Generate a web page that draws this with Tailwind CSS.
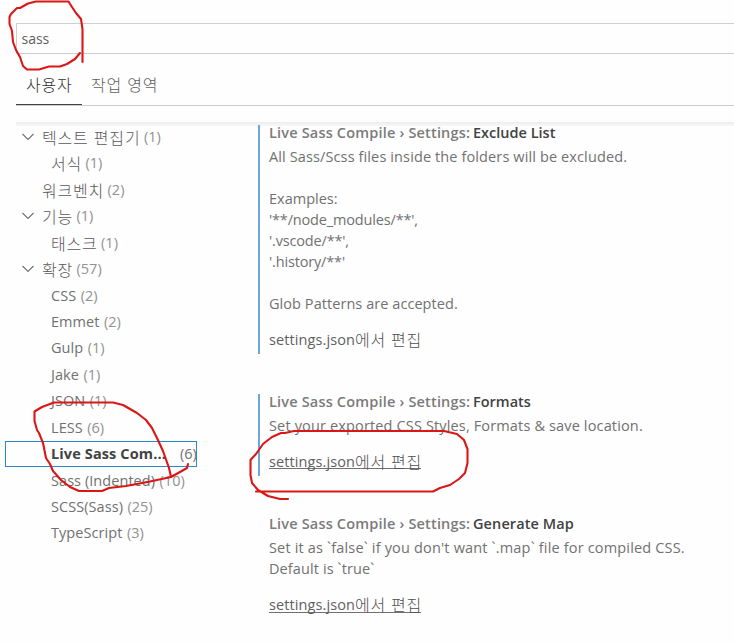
<!DOCTYPE html>
<html lang="ko">
<head>
<meta charset="utf-8">
<title>Settings</title>
<script src="https://cdn.jsdelivr.net/npm/@tailwindcss/browser@4"></script>
</head>
<body class="relative h-[643px] w-[734px] overflow-hidden bg-[#fefefe] font-['Open_Sans','Noto_Sans_CJK_KR',sans-serif] text-[14.5px] text-[#717171]">
<header class="pt-[23px] pl-4">
  <div class="flex h-[31px] items-center border border-r-0 border-[#cecece] pl-[4.5px] text-sm text-[#616161]">sass</div>
  <nav class="flex h-[52px] border-b border-[#cccccc] font-['Noto_Sans_CJK_KR',sans-serif] text-[16px] leading-[24px] font-light tracking-[0.8px] whitespace-nowrap">
    <div class="h-[51px] w-[66px] border-b border-[#424242] pt-[18px] pl-[10px] text-[#303030]">사용자</div>
    <div class="pt-[18px] pl-[9px] text-[#606060]">작업 영역</div>
  </nav>
  <div class="mt-4 h-1 bg-gradient-to-b from-[#ececec] to-[#f8f8f8]"></div>
</header>

<main class="-mt-[3px] flex">
  <aside class="w-[258px] pt-[0.7px] pl-[5px]">
    <ul id="tree" class="w-[192px] whitespace-nowrap"></ul>
  </aside>

  <section class="flex-1 whitespace-nowrap leading-[21px]">
    <article class="mt-[2px] h-[229px] border-l-2 border-[#6ba8d8] pl-[9px]">
      <h2 class="flex h-[15px] items-center gap-[3px] font-semibold text-[#7b7b7b]"><span class="w-[201px] tracking-[0.18px]">Live Sass Compile › Settings:</span><span class="text-[#424242]">Exclude List</span></h2>
      <div class="mt-[6px]">
        <p class="tracking-[0.12px]">All Sass/Scss files inside the folders will be excluded.</p>
        <p class="mt-[21px]">Examples:</p>
        <p class="tracking-[-0.16px]">'**/node_modules/**',</p>
        <p class="tracking-[-0.16px]">'.vscode/**',</p>
        <p class="tracking-[-0.16px]">'.history/**'</p>
        <p class="mt-[21px] tracking-[0.06px]">Glob Patterns are accepted.</p>
      </div>
      <a class="mt-[15px] flex h-[21px] items-center text-[#616161]"><span class="tracking-[0.1px]">settings.json</span><span class="font-['Noto_Sans_CJK_KR',sans-serif] text-[16px] font-light text-[#505050] tracking-[0.7px]">에서 편집</span></a>
    </article>

    <article class="mt-10 h-[82px] border-l-2 border-[#6ba8d8] pl-[9px]">
      <h2 class="flex h-[15px] items-center gap-[3px] font-semibold text-[#7b7b7b]"><span class="w-[201px] tracking-[0.18px]">Live Sass Compile › Settings:</span><span class="text-[#424242]">Formats</span></h2>
      <p class="mt-[6px] tracking-[0.15px]">Set your exported CSS Styles, Formats &amp; save location.</p>
      <a class="mt-[15px] flex h-[21px] w-[152px] items-center bg-[linear-gradient(#717171,#717171)] bg-[length:100%_1px] bg-[position:0_17px] bg-no-repeat text-[#616161]"><span class="tracking-[0.1px]">settings.json</span><span class="font-['Noto_Sans_CJK_KR',sans-serif] text-[16px] font-light text-[#505050] tracking-[0.7px]">에서 편집</span></a>
    </article>

    <article class="mt-10 pl-[11px]">
      <h2 class="flex h-[15px] items-center gap-[3px] font-semibold text-[#7b7b7b]"><span class="w-[201px] tracking-[0.18px]">Live Sass Compile › Settings:</span><span class="tracking-[0.1px] text-[#424242]">Generate Map</span></h2>
      <p class="mt-[6px] tracking-[0.17px]">Set it as `false` if you don't want `.map` file for compiled CSS.</p>
      <p class="tracking-[0.1px]">Default is `true`</p>
      <a class="mt-[15px] flex h-[21px] w-[152px] items-center bg-[linear-gradient(#717171,#717171)] bg-[length:100%_1px] bg-[position:0_18px] bg-no-repeat text-[#616161]"><span class="tracking-[0.1px]">settings.json</span><span class="font-['Noto_Sans_CJK_KR',sans-serif] text-[16px] font-light text-[#505050] tracking-[0.7px]">에서 편집</span></a>
    </article>
  </section>
</main>

<!-- hand-drawn marker strokes -->
<svg class="pointer-events-none absolute inset-0" width="734" height="643" viewBox="0 0 734 643" fill="none" stroke="#db1616" stroke-width="2.1" stroke-linecap="round" stroke-linejoin="round">
  <path d="M82.500 62V29L81 19L76 13L72 7L68.500 1.500H36L28 3.500L20 8H17L11 14L9.500 17V24L12 31L13 42L16 50L20 57L23 66L27 69.500H39L49 66.500H60L67 64L75 59L80 53"/>
  <path d="M188 464L187 468L180 472L171 477L150 481.500L126 486L109 488L102 491H79L70 487L61 480L53 471L50 464L46 458L43 443L39 433L37 430L34.500 421V411.500L42 407L54 402.500H113L123 405L137 413L146 420L152 428L157 438L163 451L169 468L171 477"/>
  <path d="M256 491.500H433L440 488L450 485L459 479L465 473L467.500 463V449L464 440L457 434L444 431H294L285 433H281L272 437L263 444L256 454L250.500 460V475L252 483L258 490L268 496L280 499H288"/>
</svg>

<script>
const rows = [
  ["텍스트 편집기", "(1)", "group"], ["서식", "(1)", "childKo"], ["워크벤치", "(2)", "leaf"],
  ["기능", "(1)", "group"], ["태스크", "(1)", "childKo"], ["확장", "(57)", "group"],
  ["CSS", "(2)", "child"], ["Emmet", "(2)", "child"], ["Gulp", "(1)", "child"], ["Jake", "(1)", "child"],
  ["JSON", "(1)", "child"], ["LESS", "(6)", "child"], ["Live Sass Com...", "(6)", "selected"],
  ["Sass (Indented)", "(10)", "child"], ["SCSS(Sass)", "(25)", "child"], ["TypeScript", "(3)", "child"]
];
const ko = "font-['Noto_Sans_CJK_KR',sans-serif] text-[16px] font-light text-[#585858] tracking-[0.8px]";
const chevron = '<svg class="mr-[8px] shrink-0" width="12" height="8" viewBox="0 0 12 8" fill="none" stroke="#717171" stroke-width="1.1"><path d="M.5 1L6 6.500L11.500 1"/></svg>';
document.getElementById("tree").innerHTML = rows.map(([name, count, kind]) => {
  if (kind === "selected")
    return `<li class="flex h-[26.43px] items-center justify-between overflow-hidden border border-[#2f86c6] pl-[45px]"><span class="font-bold tracking-[0.12px] text-[#424242]">${name}</span><span class="w-[16px]">${count}</span></li>`;
  const isKo = kind !== "child";
  const pad = kind === "group" ? "pl-[17px]" : kind === "leaf" ? "pl-[37px]" : "pl-[46px]";
  return `<li class="flex h-[26.43px] items-center ${pad}">${kind === "group" ? chevron : ""}<span class="${isKo ? ko : "tracking-[0.06px]"}">${name}</span><span class="${isKo ? "ml-[3.5px]" : "ml-[4.5px]"} text-[#929292]">${count}</span></li>`;
}).join("");
</script>
</body>
</html>
